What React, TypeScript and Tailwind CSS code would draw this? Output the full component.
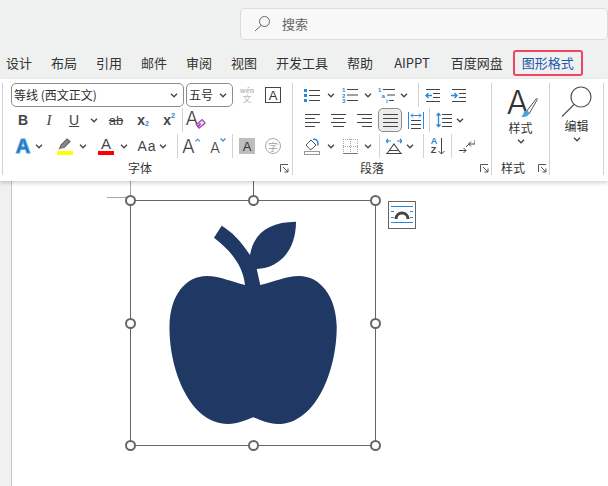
import type { ReactNode } from 'react'

const tabs = ['设计', '布局', '引用', '邮件', '审阅', '视图', '开发工具', '帮助', 'AIPPT', '百度网盘']

function Chevron({ className = '' }: { className?: string }) {
  return (
    <svg width="8" height="5" viewBox="0 0 8 5" className={`shrink-0 ${className}`}>
      <path d="M1 .8 4 3.8 7 .8" fill="none" stroke="#444" strokeWidth="1.3" />
    </svg>
  )
}

function Launcher() {
  return (
    <svg width="9" height="9" viewBox="0 0 9 9" className="shrink-0">
      <path d="M.5 8V.5H8M3 3l5 5M8 4.5V8H4.5" fill="none" stroke="#555" strokeWidth="1" />
    </svg>
  )
}

function Sep({ className = '' }: { className?: string }) {
  return <div className={`w-px h-[24px] bg-[#d2d2d2] shrink-0 ${className}`} />
}

function Cell({ className = '', children }: { className?: string; children: ReactNode }) {
  return <div className={`flex items-center justify-center shrink-0 ${className}`}>{children}</div>
}

function Combo({ label, className }: { label: string; className: string }) {
  return (
    <div className={`h-[24px] rounded-[5px] border border-[#8d8d8d] flex items-center justify-between pl-[2px] pr-[5px] text-[12px] text-[#2b2b2b] shrink-0 ${className}`}>
      <span>{label}</span>
      <Chevron />
    </div>
  )
}

// lines drawn on a 15px box, used by the alignment buttons
function LinesIcon({ rows }: { rows: [number, number][] }) {
  return (
    <svg width="15" height="15" viewBox="0 0 15 15" shapeRendering="crispEdges">
      {rows.map(([x1, x2], i) => (
        <line key={i} x1={x1} x2={x2} y1={1.5 + i * 4} y2={1.5 + i * 4} stroke="#444" />
      ))}
    </svg>
  )
}

function BulletIcon() {
  return (
    <svg width="16" height="15" viewBox="0 0 16 15" shapeRendering="crispEdges">
      {[1, 6, 11].map((y) => (
        <g key={y}>
          <rect x="0" y={y} width="3" height="3" fill="#2b88d8" />
          <line x1="5" x2="16" y1={y + 1.5} y2={y + 1.5} stroke="#444" />
        </g>
      ))}
    </svg>
  )
}

function NumberIcon() {
  return (
    <svg width="16" height="16" viewBox="0 0 16 16">
      {['1', '2', '3'].map((n, i) => (
        <g key={n}>
          <text x="0" y={5 + i * 5.5} fontSize="6" fontWeight="700" fill="#2b88d8" fontFamily="Liberation Sans">{n}</text>
          <line x1="5" x2="16" y1={2.5 + i * 5.5} y2={2.5 + i * 5.5} stroke="#444" />
        </g>
      ))}
    </svg>
  )
}

function MultiLevelIcon() {
  return (
    <svg width="17" height="16" viewBox="0 0 17 16">
      <text x="0" y="5" fontSize="6" fontWeight="700" fill="#2b88d8" fontFamily="Liberation Sans">1</text>
      <text x="3.5" y="10.5" fontSize="6" fontWeight="700" fill="#2b88d8" fontFamily="Liberation Sans">a</text>
      <text x="8" y="16" fontSize="6" fontWeight="700" fill="#2b88d8" fontFamily="Liberation Sans">i</text>
      <path d="M5 2.5h12M9 8h8M11 13.5h5" stroke="#444" fill="none" />
    </svg>
  )
}

function IndentIcon({ flip }: { flip?: boolean }) {
  return (
    <svg width="15" height="13" viewBox="0 0 15 13">
      <path d="M1 .5h14M8 4.5h7M8 8.500h7M1 12.500h14" stroke="#444" fill="none" />
      <path
        d={flip ? 'M0 6.500h6M3.500 4 6 6.500 3.500 9' : 'M1 6.500h6M3.500 4 1 6.500 3.500 9'}
        stroke="#2b88d8"
        strokeWidth="1.4"
        fill="none"
      />
    </svg>
  )
}

function Eraser() {
  return (
    <svg width="11" height="10" viewBox="0 0 12 11" className="shrink-0 ml-[-3px] mt-[8px]">
      <rect x="2" y="3" width="8.5" height="5" transform="rotate(-40 6 5.5)" fill="#f3dff5" stroke="#a445b2" strokeWidth="1.4" />
      <path d="M3 9l3-4" stroke="#a445b2" strokeWidth="2" />
    </svg>
  )
}

function FontGroup() {
  return (
    <div className="w-[290px] h-[92px] border-l border-[#d2d2d2] shrink-0 flex flex-col ml-[2px] pl-[8px]">
      <div className="flex items-center h-[24px]">
        <Combo label="等线 (西文正文)" className="w-[173px]" />
        <Combo label="五号" className="w-[47px] ml-[2px]" />
        <Cell className="w-[28px] flex-col text-[#bcbcbc]">
          <span className="text-[7px] font-bold leading-[8px] h-[8px]">wén</span>
          <span className="text-[9px] leading-[10px] h-[10px]">文</span>
        </Cell>
        <Cell className="w-[16px] h-[16px] ml-[4px] border border-[#444] text-[13px] leading-none text-[#333] font-['Liberation_Sans']">A</Cell>
      </div>
      <div className="flex items-center h-[25px] mt-[1px] text-[#444]">
        <Cell className="w-[24px] text-[14px] font-bold font-['Liberation_Sans']">B</Cell>
        <Cell className="w-[28px] text-[15px] italic font-['Liberation_Serif']">I</Cell>
        <Cell className="w-[22px] text-[14px] underline font-['Liberation_Sans']">U</Cell>
        <Cell className="w-[18px]"><Chevron /></Cell>
        <Cell className="w-[26px] text-[13px] line-through font-['Liberation_Sans']">ab</Cell>
        <Cell className="w-[28px] text-[14px] font-bold font-['Liberation_Sans']">
          x<span className="text-[7px] text-[#2b88d8] mt-[8px]">2</span>
        </Cell>
        <Cell className="w-[24px] text-[14px] font-bold font-['Liberation_Sans']">
          x<span className="text-[7px] text-[#2b88d8] mb-[8px]">2</span>
        </Cell>
        <Sep className="ml-[1px]" />
        <Cell className="w-[24px] ml-[1px]">
          <span className="text-[19px] font-light font-['Inter'] leading-none mb-[4px]">A</span>
          <Eraser />
        </Cell>
      </div>
      <div className="flex items-center h-[26px] mt-[1px] text-[#444]">
        <Cell className="w-[24px]">
          <svg width="20" height="20" viewBox="0 0 20 20">
            <text x="10" y="17" textAnchor="middle" fontSize="20" fontWeight="700" fontFamily="Liberation Sans" fill="#1d5fa8" stroke="#45a0e0" strokeWidth="1.2">A</text>
          </svg>
        </Cell>
        <Cell className="w-[8px]"><Chevron /></Cell>
        <Cell className="w-[16px] ml-[14px] flex-col">
          <svg width="16" height="12" viewBox="0 0 16 12">
            <path d="M3 10l1-3 6-6 3 2.500-6 6z" fill="#8a8a8a" stroke="#666" strokeWidth="1.2" />
            <path d="M1 12l3-2-1-1z" fill="#666" />
          </svg>
          <div className="w-[16px] h-[4px] mt-[1px] bg-[#ffff00]" />
        </Cell>
        <Cell className="w-[8px] ml-[6px]"><Chevron /></Cell>
        <Cell className="w-[16px] ml-[11px] flex-col">
          <span className="text-[15px] font-['Liberation_Sans'] leading-[12px] h-[12px]">A</span>
          <div className="w-[16px] h-[4px] mt-[1px] bg-[#ff0000]" />
        </Cell>
        <Cell className="w-[8px] ml-[6px]"><Chevron /></Cell>
        <Cell className="w-[20px] ml-[9px] text-[14px] tracking-[1px] font-['Liberation_Sans']">Aa</Cell>
        <Cell className="w-[8px] ml-[2px]"><Chevron /></Cell>
        <Sep className="ml-[10px]" />
        <Cell className="w-[18px] ml-[4px] items-start">
          <span className="text-[19px] font-light font-['Inter'] leading-none">A</span>
          <svg width="6" height="4" viewBox="0 0 6 4" className="mt-[1px]"><path d="M.5 3.500 3 1l2.500 2.500" fill="none" stroke="#2b88d8" strokeWidth="1.200" /></svg>
        </Cell>
        <Cell className="w-[18px] ml-[9px] items-start">
          <span className="text-[15px] font-light font-['Inter'] leading-none mt-[3px]">A</span>
          <svg width="6" height="4" viewBox="0 0 6 4" className="mt-[1px]"><path d="M.5.5 3 3 5.500.5" fill="none" stroke="#2b88d8" strokeWidth="1.200" /></svg>
        </Cell>
        <Sep className="ml-[5px]" />
        <Cell className="w-[16px] h-[16px] ml-[6px] bg-[#bdbdbd] text-[13px] text-[#333] font-['Liberation_Sans']">A</Cell>
        <Cell className="w-[16px] h-[16px] ml-[10px] rounded-full border border-[#a8a8a8] text-[10px] text-[#a0a0a0]">字</Cell>
      </div>
      <div className="flex items-center h-[14px] mt-[2px] text-[12px] text-[#333]">
        <span className="ml-[117px]">字体</span>
        <span className="ml-auto mr-[3px]"><Launcher /></span>
      </div>
    </div>
  )
}

function ParagraphGroup() {
  return (
    <div className="w-[199px] h-[92px] border-l border-[#d2d2d2] shrink-0 flex flex-col pl-[11px]">
      <div className="flex items-center h-[24px]">
        <Cell className="w-[16px]"><BulletIcon /></Cell>
        <Cell className="w-[8px] ml-[7px]"><Chevron /></Cell>
        <Cell className="w-[16px] ml-[7px]"><NumberIcon /></Cell>
        <Cell className="w-[8px] ml-[6px]"><Chevron /></Cell>
        <Cell className="w-[17px] ml-[6px]"><MultiLevelIcon /></Cell>
        <Cell className="w-[8px] ml-[5px]"><Chevron /></Cell>
        <Sep className="ml-[10px]" />
        <Cell className="w-[15px] ml-[6px]"><IndentIcon /></Cell>
        <Cell className="w-[15px] ml-[11px]"><IndentIcon flip /></Cell>
      </div>
      <div className="flex items-center h-[25px] mt-[1px]">
        <Cell className="w-[15px] ml-[1px]"><LinesIcon rows={[[0, 15], [0, 10], [0, 15], [0, 10]]} /></Cell>
        <Cell className="w-[15px] ml-[11px]"><LinesIcon rows={[[0, 15], [2, 13], [0, 15], [2, 13]]} /></Cell>
        <Cell className="w-[15px] ml-[11px]"><LinesIcon rows={[[0, 15], [5, 15], [0, 15], [5, 15]]} /></Cell>
        <Cell className="w-[24px] h-[24px] ml-[6px] rounded-[5px] border border-[#8d8d8d] bg-[#ececec]">
          <LinesIcon rows={[[0, 15], [0, 15], [0, 15], [0, 15]]} />
        </Cell>
        <Cell className="w-[16px] ml-[6px]">
          <svg width="16" height="17" viewBox="0 0 16 17" shapeRendering="crispEdges">
            <path d="M.5 0v17M15.500 0v17" stroke="#2b88d8" />
            <path d="M3 8.500h10M3 12.500h10M3 16.500h10" stroke="#444" />
            <path d="M3 3.500h10M5 1.500 3 3.500l2 2M11 1.500l2 2-2 2" stroke="#2b88d8" fill="none" shapeRendering="auto" />
          </svg>
        </Cell>
        <Sep className="ml-[5px]" />
        <Cell className="w-[16px] ml-[6px]">
          <svg width="16" height="16" viewBox="0 0 16 16">
            <path d="M6 2.500h10M6 6.500h10M6 10.500h10M6 14.500h10" stroke="#444" fill="none" />
            <path d="M2.500 1v14M.5 3.500l2-2 2 2M.5 12.500l2 2 2-2" stroke="#2b88d8" strokeWidth="1.300" fill="none" />
          </svg>
        </Cell>
        <Cell className="w-[8px] ml-[4px]"><Chevron /></Cell>
      </div>
      <div className="flex items-center h-[26px] mt-[1px]">
        <Cell className="w-[16px]">
          <svg width="16" height="17" viewBox="0 0 16 17">
            <path d="M2 7l5-5 5 5-4 4-2 .5z" fill="none" stroke="#555" />
            <path d="M9 1.500c3-1 5 1 5 4v2" fill="none" stroke="#2b88d8" strokeWidth="1.500" />
            <rect x=".5" y="13.500" width="15" height="3" fill="#fff" stroke="#999" />
          </svg>
        </Cell>
        <Cell className="w-[8px] ml-[7px]"><Chevron /></Cell>
        <Cell className="w-[16px] ml-[7px]">
          <svg width="15" height="15" viewBox="0 0 15 15" shapeRendering="crispEdges">
            <path d="M.5 0v15M7.500 0v15M14.500 0v15M0 .5h15M0 7.500h15" stroke="#a8a8a8" strokeDasharray="1 1" />
            <path d="M0 14.500h15" stroke="#777" />
          </svg>
        </Cell>
        <Cell className="w-[8px] ml-[6px]"><Chevron /></Cell>
        <Sep className="ml-[7px]" />
        <Cell className="w-[16px] ml-[6px]">
          <svg width="16" height="16" viewBox="0 0 16 16">
            <path d="M0 3h5M2 1l-2 2 2 2M11 3h5M14 1l2 2-2 2" stroke="#2b88d8" strokeWidth="1.200" fill="none" />
            <path d="M1.500 15 8 6l6.500 9M0 15.500h16M3.500 12.500h9" stroke="#444" strokeWidth="1.100" fill="none" />
          </svg>
        </Cell>
        <Cell className="w-[8px] ml-[4px]"><Chevron /></Cell>
        <Sep className="ml-[9px]" />
        <Cell className="w-[16px] ml-[6px]">
          <div className="flex flex-col text-[9px] font-bold leading-[9px] font-['Liberation_Sans'] mr-[1px]">
            <span className="text-[#2b88d8]">A</span>
            <span className="text-[#444]">Z</span>
          </div>
          <svg width="7" height="17" viewBox="0 0 7 17"><path d="M3.500 0v16M.5 13l3 3 3-3" stroke="#444" fill="none" /></svg>
        </Cell>
        <Sep className="ml-[5px]" />
        <Cell className="w-[16px] ml-[7px]">
          <svg width="16" height="15" viewBox="0 0 16 15">
            <path d="M0 11.500h7M4.500 9l2.500 2.500L4.500 14" stroke="#444" fill="none" />
            <path d="M7 8l3-3h6V1M12 2.500 9.500 5l2.500 2.500" stroke="#444" fill="none" />
          </svg>
        </Cell>
      </div>
      <div className="flex items-center h-[14px] mt-[2px] text-[12px] text-[#333]">
        <span className="ml-[56px]">段落</span>
        <span className="ml-auto mr-[2px]"><Launcher /></span>
      </div>
    </div>
  )
}

function StyleGroup() {
  return (
    <div className="w-[58px] h-[92px] border-l border-[#d2d2d2] shrink-0 flex flex-col items-center">
      <div className="h-[35px] w-[34px] flex items-end relative">
        <span className="text-[33px] font-light font-['Inter'] leading-[32px] h-[32px] text-[#333] ml-[3px]">A</span>
        <svg width="18" height="22" viewBox="0 0 18 22" className="absolute right-0 bottom-0">
          <path d="M6 16 16 3c1-1 2 0 1 1L9 18" fill="#fff" stroke="#555" />
          <path d="M1 21c3 0 8 0 8-4 0-2-2-3-4-2-2 1-1 4-4 6z" fill="#4aa3e0" />
        </svg>
      </div>
      <span className="text-[12px] leading-[16px] h-[16px] text-[#333] mt-[2px]">样式</span>
      <Chevron className="mt-[3px]" />
      <div className="flex items-center w-full h-[14px] mt-[17px] text-[12px] text-[#333]">
        <span className="ml-[9px]">样式</span>
        <span className="ml-auto mr-[2px]"><Launcher /></span>
      </div>
    </div>
  )
}

function EditGroup() {
  return (
    <div className="w-[55px] h-[92px] border-x border-[#d2d2d2] shrink-0 flex flex-col items-center">
      <svg width="31" height="31" viewBox="0 0 31 31" className="mt-[3px]">
        <circle cx="20" cy="11" r="10" fill="#fff" stroke="#555" strokeWidth="1.200" />
        <path d="M13 18.500 1 30.500" stroke="#555" strokeWidth="1.200" />
      </svg>
      <span className="text-[12px] leading-[16px] text-[#333] mt-[1px]">编辑</span>
      <Chevron className="mt-[3px]" />
    </div>
  )
}

function Handle({ x, y }: { x: number; y: number }) {
  return (
    <div
      className="absolute w-[11px] h-[11px] rounded-full bg-white border-2 border-[#666]"
      style={{ left: x - 5.5, top: y - 5.5 }}
    />
  )
}

function Canvas() {
  const xs = [130, 253, 375]
  const ys = [200, 323, 445]
  return (
    <div className="flex-1 bg-white ml-[11px] border-l border-[#c6c6c6] relative">
      {/* page coordinates minus the canvas origin (12, 181) are applied by this wrapper */}
      <div className="absolute left-[-12px] top-[-181px] w-[608px] h-[486px]">
        <div className="absolute left-[130px] top-[181px] w-px h-[15px] bg-[#a8a8a8]" />
        <div className="absolute left-[107px] top-[197px] w-[19px] h-px bg-[#a8a8a8]" />
        <div className="absolute left-[253px] top-[181px] w-px h-[19px] bg-[#666]" />
        <div className="absolute left-[130px] top-[200px] w-[246px] h-[246px] border border-[#666]" />
        <svg width="608" height="486" viewBox="0 0 608 486" className="absolute left-0 top-0">
          <path
            fill="#1f3864"
            d="M245 285C232 282 220 276 207 276C185 276 170 296 169.500 326C169 370 190 424 228 424C238 424 246 420 253.300 417.300C261 420 268 424 278 424C316 424 337 370 336.700 326C336 296 320 276 299 276C286 276 274 282 260.300 285L256.700 269C280 268 296 250 296 221.700C270 222 254 232 250 255C240 240 232 232 221.700 225.700L214 237.700C230 250 243 265 245 285Z"
          />
        </svg>
        {ys.map((y) =>
          xs.map((x) => (x === 253 && y === 323 ? null : <Handle key={`${x}-${y}`} x={x} y={y} />)),
        )}
        <div className="absolute left-[388px] top-[201px] w-[28px] h-[28px] border border-[#666] bg-white flex items-center justify-center">
          <svg width="22" height="18" viewBox="0 0 22 18" shapeRendering="crispEdges">
            <path d="M0 .5h22M0 16.500h22" stroke="#2b88d8" />
            <path d="M0 5.500h3M19 5.500h3M0 11.500h3M19 11.500h3" stroke="#2b88d8" />
            <path d="M5 13c0-8 12-8 12 0" fill="none" stroke="#444" strokeWidth="3" shapeRendering="auto" />
          </svg>
        </div>
      </div>
    </div>
  )
}

export default function App() {
  return (
    <div className="w-[608px] h-[486px] overflow-hidden bg-[#eff1f0] flex flex-col font-['Noto_Sans_CJK_SC','Noto_Sans',sans-serif]">
      <div className="h-[46px] shrink-0 pt-[8px] pl-[240px]">
        <div className="h-[32px] w-[368px] rounded-[4px] border border-[#dcdcdc] bg-[#f8f8f8] flex items-center pl-[13px] pb-[1px] gap-[11px] text-[13px] text-[#666]">
          <svg width="17" height="17" viewBox="0 0 17 17">
            <circle cx="10.500" cy="6.500" r="5" fill="none" stroke="#666" />
            <path d="M7 10.500 1 16" stroke="#666" />
          </svg>
          <span>搜索</span>
        </div>
      </div>
      <div className="h-[33px] shrink-0 flex items-center pl-[6px] gap-[19px] text-[13px] text-[#333]">
        {tabs.map((t) => (
          <span key={t} className={t === 'AIPPT' ? 'mx-[2px]' : ''}>{t}</span>
        ))}
        <span className="ml-[-9px] h-[26px] px-[7px] flex items-center rounded-[3px] border-2 border-[#ee4560] text-[#1f57ad]">图形格式</span>
      </div>
      <div className="h-[102px] shrink-0 bg-white flex pt-[4px] shadow-[0_2px_4px_rgba(0,0,0,0.18)] z-10">
        <FontGroup />
        <ParagraphGroup />
        <StyleGroup />
        <EditGroup />
      </div>
      <Canvas />
    </div>
  )
}
